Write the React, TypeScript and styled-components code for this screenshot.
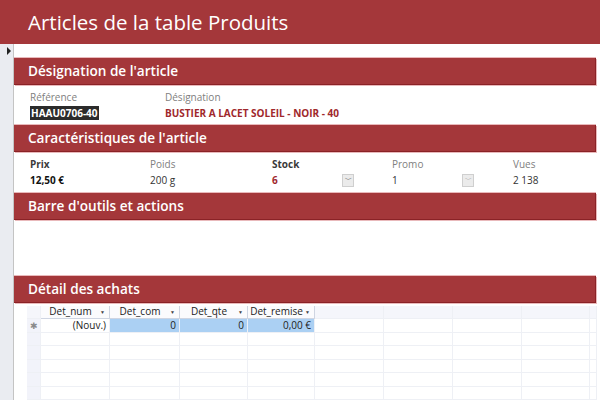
import React from "react";
import styled, { createGlobalStyle } from "styled-components";

const RED = "#a4373a";

const Global = createGlobalStyle`
  html, body { margin: 0; padding: 0; background: #fff; }
  body { font-family: "Open Sans", "Noto Sans", sans-serif; width: 600px; height: 400px; overflow: hidden; }
  * { box-sizing: border-box; }
`;

const Page = styled.div`
  width: 600px;
  height: 400px;
  display: flex;
  flex-direction: column;
  overflow: hidden;
`;

const TitleBar = styled.header`
  height: 44px;
  flex: none;
  background: ${RED};
  color: #fff;
  font-size: 20.5px;
  line-height: 44px;
  padding-left: 28px;
  white-space: nowrap;
`;

const Body = styled.div`
  flex: 1;
  display: flex;
  min-height: 0;
`;

const RecordSelector = styled.div`
  width: 14px;
  flex: none;
  background: #eaecf1;
  border-right: 1px solid #c4c4c4;
  padding-top: 3px;
  display: flex;
  justify-content: flex-end;
  align-items: flex-start;
  padding-right: 2px;
`;

const Arrow = styled.div`
  width: 0;
  height: 0;
  border-top: 4px solid transparent;
  border-bottom: 4px solid transparent;
  border-left: 4px solid #222;
`;

const Content = styled.div`
  flex: 1;
  padding: 14px 4px 0 0;
  display: flex;
  flex-direction: column;
  min-width: 0;
`;

const SectionBar = styled.div`
  height: 27px;
  flex: none;
  background: ${RED};
  border-right: 1px solid #8a2226;
  border-bottom: 1px solid #8a2226;
  box-shadow: 1px 1px 0 #e9b9bb, 0 -1px 0 #e9b9bb;
  color: #fff;
  font-size: 13.6px;
  font-weight: 600;
  line-height: 26px;
  padding-left: 14px;
  white-space: nowrap;
`;

const FieldGrid = styled.div<{ $cols: string; $h: number }>`
  height: ${(p) => p.$h}px;
  display: grid;
  grid-template-columns: ${(p) => p.$cols};
  padding: 6px 0 0 16px;
  align-content: start;
`;

const Field = styled.div`
  display: flex;
  flex-direction: column;
  gap: 2px;
`;

const Label = styled.div<{ $strong?: boolean }>`
  font-size: 10px;
  line-height: 13px;
  color: ${(p) => (p.$strong ? "#3a3a3a" : "#808080")};
  font-weight: ${(p) => (p.$strong ? 700 : 400)};
`;

const Value = styled.div<{ $bold?: boolean; $red?: boolean }>`
  font-size: 10px;
  line-height: 14px;
  height: 14px;
  font-weight: ${(p) => (p.$bold ? 700 : 400)};
  color: ${(p) => (p.$red ? "#a0282c" : p.$bold ? "#111" : "#333")};
  display: flex;
  align-items: center;
  white-space: nowrap;
`;

const Selected = styled.span`
  background: #2b2b2b;
  color: #fff;
  font-weight: 700;
  padding: 0 1px;
`;

const ComboValue = styled.div`
  width: 82px;
  display: flex;
  justify-content: space-between;
  align-items: center;
`;

const ComboButton = styled.span`
  width: 12px;
  height: 13px;
  background: #ebebeb;
  border: 1px solid #cfcfcf;
  display: flex;
  align-items: center;
  justify-content: center;
  color: #8a8a8a;
  font-size: 7px;
`;

const Spacer = styled.div<{ $h: number }>`
  height: ${(p) => p.$h}px;
  flex: none;
`;

const Sheet = styled.div`
  margin: 3px 0 0 13px;
  display: grid;
  grid-template-columns: 14px 69px 70px 68px 67px 69px 69px 69px 68px 7px;
  grid-auto-rows: 13.5px;
  border-right: 1px solid #e4e6ee;
`;

const Cell = styled.div<{ $kind?: "head" | "headEmpty" | "sel" | "blue" | "plain" | "selEmpty" }>`
  font-size: 10px;
  line-height: 13px;
  white-space: nowrap;
  overflow: hidden;
  padding: 0 3px;
  display: flex;
  align-items: center;
  border-right: 1px solid
    ${(p) => (p.$kind === "head" ? "#cfd5e2" : "#eef0f5")};
  border-bottom: 1px solid
    ${(p) => (p.$kind === "head" ? "#cfd5e2" : "#eef0f5")};
  color: #222;
  background: ${(p) =>
    p.$kind === "head"
      ? "#fbfbfd"
      : p.$kind === "headEmpty"
      ? "#f5f6fb"
      : p.$kind === "sel" || p.$kind === "selEmpty"
      ? "#f2f3fa"
      : p.$kind === "blue"
      ? "#abd0f3"
      : "#fff"};
`;

const HeadCell = styled(Cell)`
  justify-content: center;
  position: relative;
  padding-right: 12px;
`;

const Drop = styled.span`
  position: absolute;
  right: 4px;
  top: 0;
  font-size: 5px;
  color: #444;
`;

const NumCell = styled(Cell)`
  justify-content: flex-end;
`;

const Star = styled(Cell)`
  justify-content: center;
  color: #8a8a8a;
  font-size: 9px;
  padding: 0;
`;

const headers = ["Det_num", "Det_com", "Det_qte", "Det_remise"];

export default function App() {
  const emptyRows = 5;
  return (
    <>
      <Global />
      <Page>
        <TitleBar>Articles de la table Produits</TitleBar>
        <Body>
          <RecordSelector>
            <Arrow />
          </RecordSelector>
          <Content>
            <SectionBar>Désignation de l'article</SectionBar>
            <FieldGrid $cols="135px 1fr" $h={42}>
              <Field>
                <Label>Référence</Label>
                <Value>
                  <Selected>HAAU0706-40</Selected>
                </Value>
              </Field>
              <Field>
                <Label>Désignation</Label>
                <Value $bold $red>
                  BUSTIER A LACET SOLEIL - NOIR - 40
                </Value>
              </Field>
            </FieldGrid>
            <SectionBar>Caractéristiques de l'article</SectionBar>
            <FieldGrid $cols="120px 122px 120px 121px 1fr" $h={42}>
              <Field>
                <Label $strong>Prix</Label>
                <Value $bold>12,50 €</Value>
              </Field>
              <Field>
                <Label>Poids</Label>
                <Value>200 g</Value>
              </Field>
              <Field>
                <Label $strong>Stock</Label>
                <Value $bold $red>
                  <ComboValue>
                    6<ComboButton>﹀</ComboButton>
                  </ComboValue>
                </Value>
              </Field>
              <Field>
                <Label>Promo</Label>
                <Value>
                  <ComboValue>
                    1<ComboButton>﹀</ComboButton>
                  </ComboValue>
                </Value>
              </Field>
              <Field>
                <Label>Vues</Label>
                <Value>2 138</Value>
              </Field>
            </FieldGrid>
            <SectionBar>Barre d'outils et actions</SectionBar>
            <Spacer $h={56} />
            <SectionBar>Détail des achats</SectionBar>
            <Sheet>
              <Cell $kind="headEmpty" />
              {headers.map((h) => (
                <HeadCell key={h} $kind="head">
                  {h}
                  <Drop>▼</Drop>
                </HeadCell>
              ))}
              {[0, 1, 2, 3, 4].map((i) => (
                <Cell key={"he" + i} $kind="headEmpty" />
              ))}
              <Star $kind="sel">✱</Star>
              <NumCell $kind="plain">(Nouv.)</NumCell>
              <NumCell $kind="blue">0</NumCell>
              <NumCell $kind="blue">0</NumCell>
              <NumCell $kind="blue">0,00 €</NumCell>
              {[0, 1, 2, 3, 4].map((i) => (
                <Cell key={"ne" + i} $kind="plain" />
              ))}
              {Array.from({ length: emptyRows }).map((_, r) => (
                <React.Fragment key={"r" + r}>
                  <Cell $kind="selEmpty" />
                  {Array.from({ length: 9 }).map((__, c) => (
                    <Cell key={c} $kind="plain" />
                  ))}
                </React.Fragment>
              ))}
            </Sheet>
          </Content>
        </Body>
      </Page>
    </>
  );
}
